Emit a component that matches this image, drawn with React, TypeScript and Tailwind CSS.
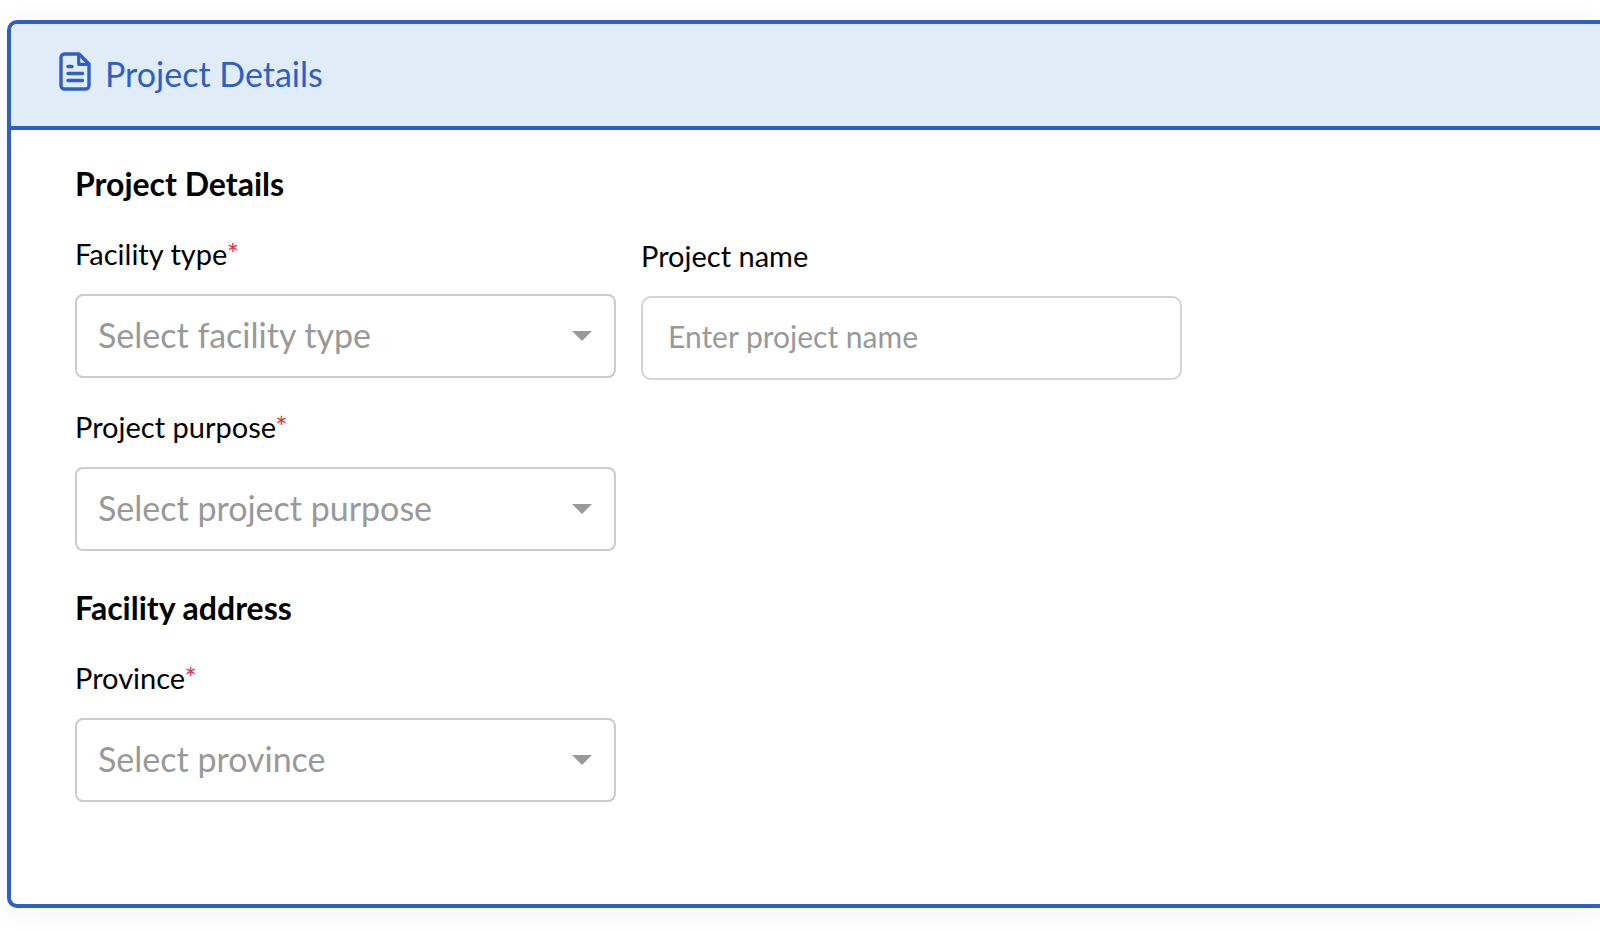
import { useState } from "react"
import type { ReactNode } from "react"

interface SelectFieldProps {
  id: string
  label: string
  placeholder: string
  options: string[]
}

const facilityTypes = ["Hospital", "School", "Office"]
const purposes = ["New construction", "Renovation", "Expansion"]
const provinces = ["Alberta", "British Columbia", "Manitoba", "Ontario", "Quebec"]

// File icon with folded corner
function FileTextIcon() {
  return (
    <svg width="32" height="39" viewBox="0 0 32 39" fill="none" aria-hidden="true">
      <path
        d="M20 2H5.5A3.5 3.5 0 0 0 2 5.5v28A3.5 3.5 0 0 0 5.5 37h21a3.5 3.5 0 0 0 3.5-3.5V12L20 2Z"
        stroke="currentColor"
        strokeWidth="3.4"
        strokeLinejoin="round"
      />
      <path d="M19.7 2.5v9.8H29.500" stroke="currentColor" strokeWidth="3.2" strokeLinejoin="round" />
      <path d="M9 14.5h4M9 21.5h14.5M9 28.5h14.5" stroke="currentColor" strokeWidth="3.4" strokeLinecap="round" />
    </svg>
  )
}

function FieldLabel({ htmlFor, required, children }: { htmlFor: string; required?: boolean; children: ReactNode }) {
  return (
    <label htmlFor={htmlFor} className="block text-[29px] leading-9 text-black">
      {children}
      {required && <span className="text-[#dc3350]">*</span>}
    </label>
  )
}

function SelectField({ id, label, placeholder, options }: SelectFieldProps) {
  const [value, setValue] = useState("")

  return (
    <div>
      <FieldLabel htmlFor={id} required>
        {label}
      </FieldLabel>
      <div className="relative mt-[22px]">
        <select
          id={id}
          required
          value={value}
          onChange={(e) => setValue(e.target.value)}
          className="block h-[84px] w-full appearance-none rounded-lg border-2 border-[#cccccc] bg-white pb-1 pl-[21px] pr-16 text-[34px] text-black invalid:text-[#999999] focus:outline-none"
        >
          <option value="" disabled>
            {placeholder}
          </option>
          {options.map((option) => (
            <option key={option} value={option}>
              {option}
            </option>
          ))}
        </select>
        <svg
          width="20"
          height="10"
          viewBox="0 0 20 10"
          className="pointer-events-none absolute right-6 top-[37px] text-[#999999]"
          aria-hidden="true"
        >
          <path d="M0 0h20L10 10Z" fill="currentColor" />
        </svg>
      </div>
    </div>
  )
}

export default function App() {
  const [projectName, setProjectName] = useState("")

  return (
    <main className="overflow-hidden bg-white pb-6 pl-[7px] pt-5 font-['Lato','Liberation_Sans',sans-serif]">
      <section className="overflow-hidden rounded-l-[10px] border-4 border-r-0 border-[#2f5fc4] bg-white shadow-[0_4px_30px_rgba(0,0,0,0.05)]">
        <header className="flex items-start border-b-4 border-[#2f5fc4] bg-[#e0ecf8] pb-[31px] pl-12 pt-7 text-[#2f5fc4]">
          <FileTextIcon />
          <h1 className="ml-3.5 text-[34px] leading-[43px]">Project Details</h1>
        </header>

        <form className="pb-[102px] pl-16 pr-16 pt-[34px]">
          <h2 className="text-[32px] font-bold leading-10 text-black">Project Details</h2>
          <div className="mt-8 grid grid-cols-[541px_541px] gap-x-[25px] gap-y-[29px]">
            <SelectField
              id="facility-type"
              label="Facility type"
              placeholder="Select facility type"
              options={facilityTypes}
            />
            <div className="pt-0.5">
              <FieldLabel htmlFor="project-name">Project name</FieldLabel>
              <input
                id="project-name"
                type="text"
                placeholder="Enter project name"
                value={projectName}
                onChange={(e) => setProjectName(e.target.value)}
                className="mt-[22px] block h-[84px] w-full rounded-[10px] border-2 border-[#d4d4d4] bg-white px-[25px] pb-1 text-[30px] text-black placeholder:text-[#999999] focus:outline-none"
              />
            </div>
            <SelectField
              id="project-purpose"
              label="Project purpose"
              placeholder="Select project purpose"
              options={purposes}
            />
          </div>

          <h2 className="mt-[37px] text-[32px] font-bold leading-10 text-black">Facility address</h2>
          <div className="mt-8 grid grid-cols-[541px_541px] gap-x-[25px]">
            <SelectField id="province" label="Province" placeholder="Select province" options={provinces} />
          </div>
        </form>
      </section>
    </main>
  )
}
